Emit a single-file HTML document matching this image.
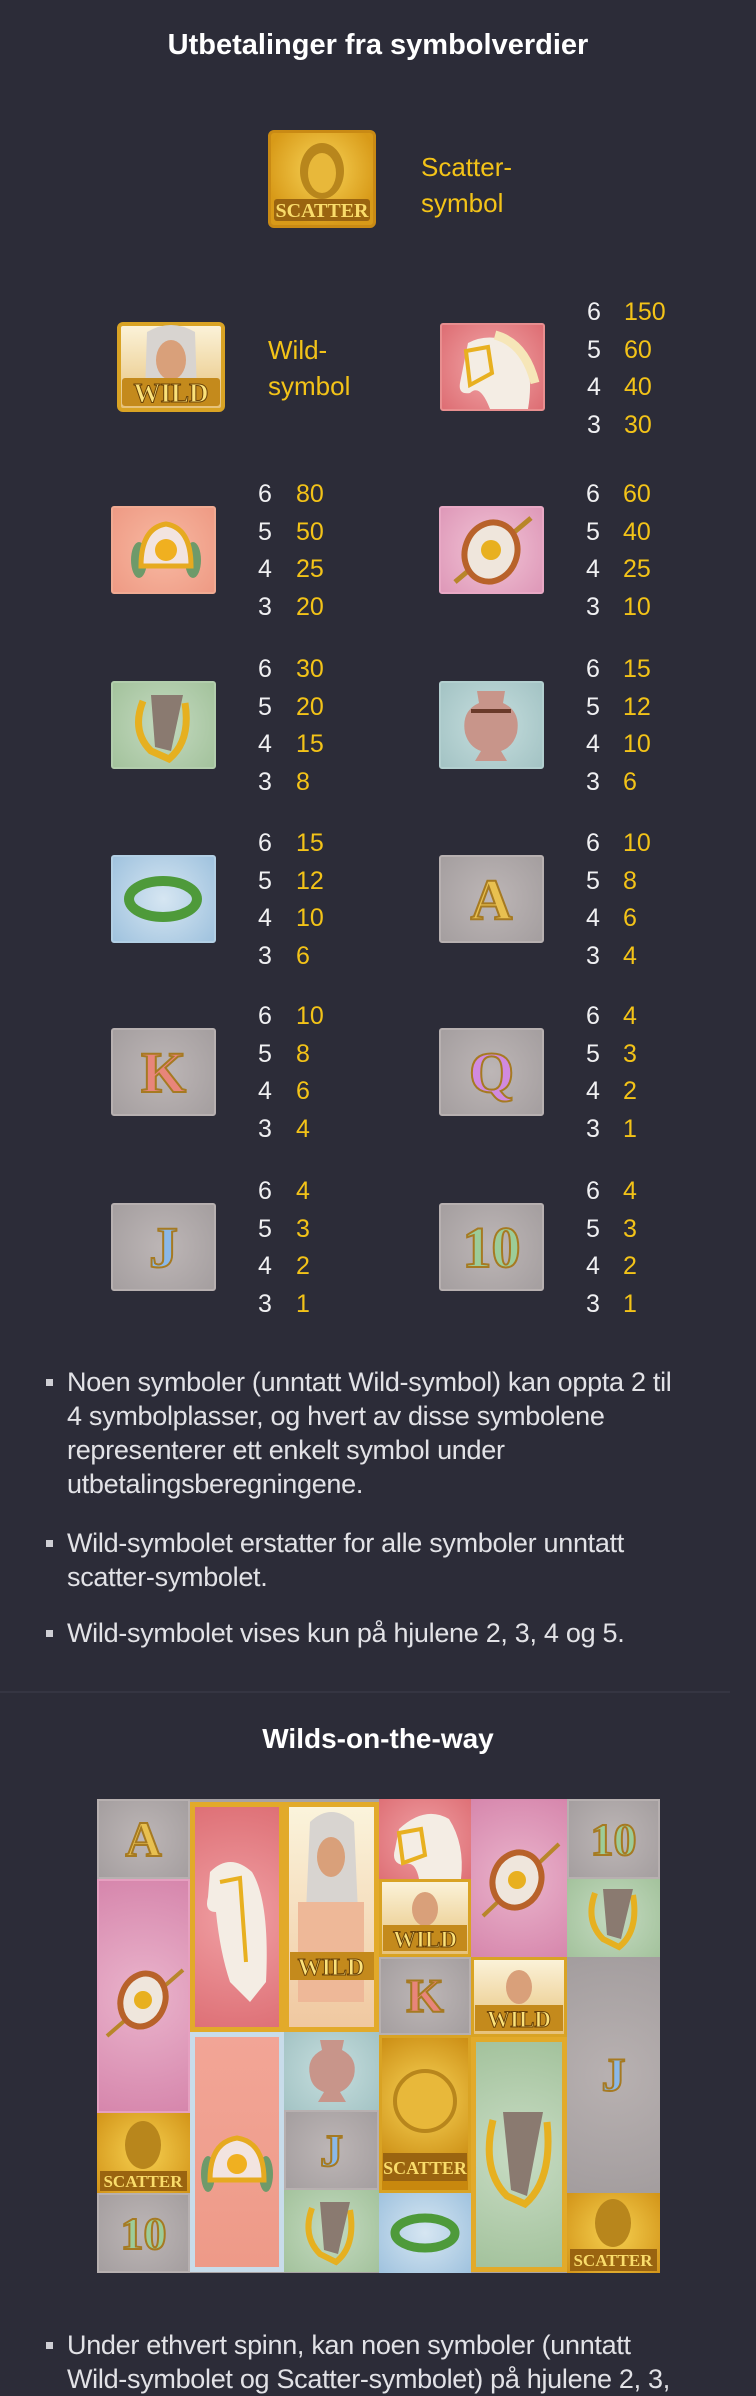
<!DOCTYPE html>
<html><head><meta charset="utf-8">
<style>
*{margin:0;padding:0;box-sizing:border-box}
body{width:756px;height:2384px;background:#2c2c38;position:relative;overflow:hidden;font-family:"Liberation Sans",sans-serif;color:#e8e8ea}
.a{position:absolute}
.t{position:absolute;left:0;width:756px;text-align:center;color:#fff;font-size:29px;font-weight:bold;line-height:34px}
.y{color:#f3c318;font-size:26px;line-height:36px}
.n{position:absolute;font-size:25px;line-height:37.5px}
.n span{display:block}
.w{color:#f0f0f2}
.v{color:#f3c318}
.ic{position:absolute;width:105px;height:88px;border-radius:3px;overflow:hidden}
.grey{background:radial-gradient(circle,#bdb6b6,#a49e9f);border:2px solid #b7b0b0}
.let{position:absolute;left:0;top:0;width:100%;height:100%;display:flex;align-items:center;justify-content:center;font-family:"Liberation Serif",serif;font-weight:bold;font-size:58px;-webkit-text-stroke:2px #a67a22}
.bl{position:absolute;left:67px;width:689px;font-size:27px;line-height:34px;color:#e2e2e6;letter-spacing:-0.3px}
.bl:before{content:"";position:absolute;left:-21px;top:14px;width:7px;height:7px;background:#cfcfd4}
.cell{position:absolute;overflow:hidden}
</style></head><body>

<div class="t" style="top:28px">Utbetalinger fra symbolverdier</div>

<!-- scatter -->
<div class="a" style="left:268px;top:130px;width:108px;height:98px;border-radius:6px;background:radial-gradient(circle at 50% 40%,#f8d458,#d89a18 75%);border:3px solid #c98a14"></div>
<svg class="a" style="left:268px;top:125px" width="108" height="108"><ellipse cx="54" cy="46" rx="22" ry="28" fill="#b8861c"/><ellipse cx="54" cy="48" rx="14" ry="20" fill="#e8b83a"/><rect x="6" y="74" width="96" height="22" rx="3" fill="#9a6410"/><text x="54" y="92" text-anchor="middle" font-family="Liberation Serif" font-weight="bold" font-size="20" fill="#f9dc6a">SCATTER</text></svg>
<div class="a y" style="left:421px;top:149px">Scatter-<br>symbol</div>

<!-- wild -->
<div class="a" style="left:117px;top:322px;width:108px;height:90px;border-radius:6px;background:linear-gradient(#fbf2d8,#e7c27a);border:4px solid #d9a324"></div>
<svg class="a" style="left:117px;top:322px" width="108" height="90"><path d="M30 10 Q54 -4 78 10 L80 70 L28 70Z" fill="#d8d4d0"/><ellipse cx="54" cy="38" rx="15" ry="20" fill="#d9a07a"/><rect x="5" y="56" width="98" height="28" rx="3" fill="#c48a1c"/><text x="54" y="80" text-anchor="middle" font-family="Liberation Serif" font-weight="bold" font-size="27" fill="#fbe27a" stroke="#6a4208" stroke-width="1">WILD</text></svg>
<div class="a y" style="left:268px;top:332px">Wild-<br>symbol</div>

<!-- horse -->
<div class="ic" style="left:440px;top:323px;background:radial-gradient(circle,#f3a9aa,#dd6d73);border:2px solid #e88e8f"></div>
<svg class="a" style="left:440px;top:323px" width="105" height="88"><path d="M28 20 Q50 8 78 22 Q95 45 88 86 L50 86 Q40 60 30 70 Q18 72 20 60Z" fill="#f4ede4"/><path d="M26 28 L48 24 L52 50 L30 62Z" fill="none" stroke="#e8b020" stroke-width="4"/><path d="M55 12 Q85 20 95 60" fill="none" stroke="#f6e6b8" stroke-width="9"/></svg>
<div class="n" style="left:587px;top:294px"><span class="w">6</span><span class="w">5</span><span class="w">4</span><span class="w">3</span></div>
<div class="n" style="left:624px;top:294px"><span class="v">150</span><span class="v">60</span><span class="v">40</span><span class="v">30</span></div>

<!-- row 2 -->
<div class="ic" style="left:111px;top:506px;background:radial-gradient(circle,#f8b9a2,#ee9a84);border:2px solid #f0aa92"></div>
<svg class="a" style="left:111px;top:506px" width="105" height="88"><ellipse cx="28" cy="54" rx="8" ry="18" fill="#6e9a6a"/><ellipse cx="82" cy="54" rx="8" ry="18" fill="#6e9a6a"/><path d="M30 60 Q30 22 55 18 Q80 22 80 60Z" fill="#f2e4e0" stroke="#e6aa20" stroke-width="5"/><circle cx="55" cy="44" r="11" fill="#f0b020"/></svg>
<div class="n" style="left:258px;top:476px"><span class="w">6</span><span class="w">5</span><span class="w">4</span><span class="w">3</span></div>
<div class="n" style="left:296px;top:476px"><span class="v">80</span><span class="v">50</span><span class="v">25</span><span class="v">20</span></div>

<div class="ic" style="left:439px;top:506px;background:radial-gradient(circle,#f2c4d6,#de98b8);border:2px solid #e8a8c4"></div>
<svg class="a" style="left:439px;top:506px" width="105" height="88"><path d="M16 76 L92 12" stroke="#b8862a" stroke-width="5"/><ellipse cx="52" cy="46" rx="26" ry="30" transform="rotate(20 52 46)" fill="#efe6dc" stroke="#b8622a" stroke-width="6"/><circle cx="52" cy="44" r="10" fill="#e8b020"/></svg>
<div class="n" style="left:586px;top:476px"><span class="w">6</span><span class="w">5</span><span class="w">4</span><span class="w">3</span></div>
<div class="n" style="left:623px;top:476px"><span class="v">60</span><span class="v">40</span><span class="v">25</span><span class="v">10</span></div>

<!-- row 3 -->
<div class="ic" style="left:111px;top:681px;background:radial-gradient(circle,#c4dac0,#a3c29c);border:2px solid #b2cdac"></div>
<svg class="a" style="left:111px;top:681px" width="105" height="88"><path d="M32 20 Q20 50 40 70 L58 78 Q80 60 74 22" fill="none" stroke="#e6b020" stroke-width="7"/><path d="M40 14 L72 14 L60 70 L44 66Z" fill="#8a7a70"/></svg>
<div class="n" style="left:258px;top:651px"><span class="w">6</span><span class="w">5</span><span class="w">4</span><span class="w">3</span></div>
<div class="n" style="left:296px;top:651px"><span class="v">30</span><span class="v">20</span><span class="v">15</span><span class="v">8</span></div>

<div class="ic" style="left:439px;top:681px;background:radial-gradient(circle,#c6dede,#a3c3c4);border:2px solid #b2cfcf"></div>
<svg class="a" style="left:439px;top:681px" width="105" height="88"><path d="M38 10 L66 10 L64 22 Q82 30 78 52 Q74 66 62 70 L68 80 L36 80 L42 70 Q30 66 26 52 Q22 30 40 22Z" fill="#c8958a"/><path d="M32 30 L72 30" stroke="#6a3a2a" stroke-width="4"/></svg>
<div class="n" style="left:586px;top:651px"><span class="w">6</span><span class="w">5</span><span class="w">4</span><span class="w">3</span></div>
<div class="n" style="left:623px;top:651px"><span class="v">15</span><span class="v">12</span><span class="v">10</span><span class="v">6</span></div>

<!-- row 4 -->
<div class="ic" style="left:111px;top:855px;background:radial-gradient(circle,#d6e6f2,#9fc2de);border:2px solid #b2cfe4"></div>
<svg class="a" style="left:111px;top:855px" width="105" height="88"><ellipse cx="52" cy="44" rx="34" ry="18" fill="none" stroke="#4e9a3a" stroke-width="10"/></svg>
<div class="n" style="left:258px;top:825px"><span class="w">6</span><span class="w">5</span><span class="w">4</span><span class="w">3</span></div>
<div class="n" style="left:296px;top:825px"><span class="v">15</span><span class="v">12</span><span class="v">10</span><span class="v">6</span></div>

<div class="ic grey" style="left:439px;top:855px"><div class="let" style="color:#e8c050">A</div></div>
<div class="n" style="left:586px;top:825px"><span class="w">6</span><span class="w">5</span><span class="w">4</span><span class="w">3</span></div>
<div class="n" style="left:623px;top:825px"><span class="v">10</span><span class="v">8</span><span class="v">6</span><span class="v">4</span></div>

<!-- row 5 -->
<div class="ic grey" style="left:111px;top:1028px"><div class="let" style="color:#e8857a">K</div></div>
<div class="n" style="left:258px;top:998px"><span class="w">6</span><span class="w">5</span><span class="w">4</span><span class="w">3</span></div>
<div class="n" style="left:296px;top:998px"><span class="v">10</span><span class="v">8</span><span class="v">6</span><span class="v">4</span></div>

<div class="ic grey" style="left:439px;top:1028px"><div class="let" style="color:#d08ae0">Q</div></div>
<div class="n" style="left:586px;top:998px"><span class="w">6</span><span class="w">5</span><span class="w">4</span><span class="w">3</span></div>
<div class="n" style="left:623px;top:998px"><span class="v">4</span><span class="v">3</span><span class="v">2</span><span class="v">1</span></div>

<!-- row 6 -->
<div class="ic grey" style="left:111px;top:1203px"><div class="let" style="color:#8ab8e8">J</div></div>
<div class="n" style="left:258px;top:1173px"><span class="w">6</span><span class="w">5</span><span class="w">4</span><span class="w">3</span></div>
<div class="n" style="left:296px;top:1173px"><span class="v">4</span><span class="v">3</span><span class="v">2</span><span class="v">1</span></div>

<div class="ic grey" style="left:439px;top:1203px"><div class="let" style="color:#9ccc98">10</div></div>
<div class="n" style="left:586px;top:1173px"><span class="w">6</span><span class="w">5</span><span class="w">4</span><span class="w">3</span></div>
<div class="n" style="left:623px;top:1173px"><span class="v">4</span><span class="v">3</span><span class="v">2</span><span class="v">1</span></div>

<!-- bullets -->
<div class="bl" style="top:1365px">Noen symboler (unntatt Wild-symbol) kan oppta 2 til<br>4 symbolplasser, og hvert av disse symbolene<br>representerer ett enkelt symbol under<br>utbetalingsberegningene.</div>
<div class="bl" style="top:1526px">Wild-symbolet erstatter for alle symboler unntatt<br>scatter-symbolet.</div>
<div class="bl" style="top:1616px">Wild-symbolet vises kun på hjulene 2, 3, 4 og 5.</div>

<div class="a" style="left:0;top:1691px;width:730px;height:2px;background:#353542"></div>
<div class="t" style="top:1722px;font-size:28px">Wilds-on-the-way</div>

<!-- grid -->
<div class="a" style="left:97px;top:1799px;width:563px;height:474px;background:#a8a2a3"></div>
<!-- col0 -->
<div class="cell grey" style="left:97px;top:1799px;width:93px;height:80px"><div class="let" style="color:#e8c050;font-size:50px">A</div></div>
<div class="cell" style="left:97px;top:1879px;width:93px;height:234px;background:radial-gradient(circle,#eab4cc,#d686ac);border:2px solid #e6a0c0"></div>
<svg class="a" style="left:97px;top:1960px" width="93" height="80"><path d="M10 76 L86 10" stroke="#b8862a" stroke-width="4"/><ellipse cx="46" cy="40" rx="22" ry="27" transform="rotate(20 46 40)" fill="#efe6dc" stroke="#b8622a" stroke-width="6"/><circle cx="46" cy="40" r="9" fill="#e8b020"/></svg>
<div class="cell" style="left:97px;top:2113px;width:93px;height:80px;background:radial-gradient(circle,#f6d050,#d29418);"></div>
<svg class="a" style="left:97px;top:2113px" width="93" height="80"><ellipse cx="46" cy="32" rx="18" ry="24" fill="#b8861c"/><rect x="3" y="58" width="87" height="20" fill="#9a6410"/><text x="46" y="74" text-anchor="middle" font-family="Liberation Serif" font-weight="bold" font-size="17" fill="#f9dc6a">SCATTER</text></svg>
<div class="cell grey" style="left:97px;top:2193px;width:93px;height:80px"><div class="let" style="color:#9ccc98;font-size:46px">10</div></div>
<!-- col1 -->
<div class="cell" style="left:190px;top:1802px;width:94px;height:230px;background:radial-gradient(circle,#f0a0a4,#de7076);border:5px solid #e2aa2a"></div>
<svg class="a" style="left:190px;top:1802px" width="94" height="230"><path d="M20 70 Q40 50 62 70 Q80 100 76 180 L60 200 L40 180 Q30 150 26 110 Q14 110 18 95Z" fill="#f4ede4"/><path d="M30 80 L50 76 L56 160" fill="none" stroke="#e8b020" stroke-width="4"/></svg>
<div class="cell" style="left:190px;top:2032px;width:94px;height:240px;background:linear-gradient(#f2a596,#ee9a88);border:5px solid #c8dcea"></div>
<svg class="a" style="left:190px;top:2130px" width="94" height="80"><ellipse cx="18" cy="44" rx="7" ry="18" fill="#6e9a6a"/><ellipse cx="76" cy="44" rx="7" ry="18" fill="#6e9a6a"/><path d="M20 50 Q20 12 47 8 Q74 12 74 50Z" fill="#f2e4e0" stroke="#e6aa20" stroke-width="5"/><circle cx="47" cy="34" r="10" fill="#f0b020"/></svg>
<!-- col2 -->
<div class="cell" style="left:284px;top:1802px;width:95px;height:230px;background:linear-gradient(#fbf4dc,#f0c8a0);border:5px solid #e2aa2a"></div>
<svg class="a" style="left:284px;top:1802px" width="95" height="230"><path d="M26 20 Q47 0 70 20 L74 110 L22 110Z" fill="#d8d4d0"/><ellipse cx="47" cy="55" rx="14" ry="20" fill="#d9a07a"/><path d="M14 100 L80 100 L80 200 L14 200Z" fill="#eeb898"/><rect x="6" y="150" width="84" height="28" fill="#c48a1c"/><text x="47" y="173" text-anchor="middle" font-family="Liberation Serif" font-weight="bold" font-size="24" fill="#fbe27a" stroke="#6a4208" stroke-width="1">WILD</text></svg>
<div class="cell" style="left:284px;top:2032px;width:95px;height:78px;background:radial-gradient(circle,#c6dede,#a3c3c4)"></div>
<svg class="a" style="left:284px;top:2032px" width="95" height="78"><path d="M36 8 L60 8 L58 18 Q74 26 70 44 Q66 56 56 60 L62 70 L34 70 L40 60 Q28 56 26 44 Q22 26 38 18Z" fill="#c8958a"/></svg>
<div class="cell grey" style="left:284px;top:2110px;width:95px;height:80px"><div class="let" style="color:#8ab8e8;font-size:46px">J</div></div>
<div class="cell" style="left:284px;top:2190px;width:95px;height:82px;background:radial-gradient(circle,#c4dac0,#a3c29c)"></div>
<svg class="a" style="left:284px;top:2190px" width="95" height="82"><path d="M28 18 Q18 46 36 64 L52 72 Q72 56 66 20" fill="none" stroke="#e6b020" stroke-width="6"/><path d="M36 12 L66 12 L54 64 L40 60Z" fill="#8a7a70"/></svg>
<!-- col3 -->
<div class="cell" style="left:379px;top:1799px;width:92px;height:80px;background:radial-gradient(circle,#f0a0a4,#de7076)"></div>
<svg class="a" style="left:379px;top:1799px" width="92" height="80"><path d="M20 30 Q46 6 70 20 Q86 45 82 80 L40 80 Q36 60 24 66 Q12 64 16 50Z" fill="#f4ede4"/><path d="M20 34 L42 30 L46 56 L24 64Z" fill="none" stroke="#e8b020" stroke-width="4"/></svg>
<div class="cell" style="left:379px;top:1879px;width:92px;height:78px;background:linear-gradient(#fbf2d8,#e7c27a);border:3px solid #d9a324"></div>
<svg class="a" style="left:379px;top:1879px" width="92" height="78"><ellipse cx="46" cy="30" rx="13" ry="17" fill="#d9a07a"/><rect x="4" y="46" width="84" height="26" fill="#c48a1c"/><text x="46" y="68" text-anchor="middle" font-family="Liberation Serif" font-weight="bold" font-size="23" fill="#fbe27a" stroke="#6a4208" stroke-width="1">WILD</text></svg>
<div class="cell grey" style="left:379px;top:1957px;width:92px;height:78px"><div class="let" style="color:#e8857a;font-size:48px">K</div></div>
<div class="cell" style="left:379px;top:2035px;width:92px;height:158px;background:radial-gradient(circle at 50% 40%,#f8d458,#c8880e 80%);border:3px solid #d9a324"></div>
<svg class="a" style="left:379px;top:2035px" width="92" height="158"><circle cx="46" cy="66" r="30" fill="#e8b83a" stroke="#b8861c" stroke-width="4"/><rect x="4" y="118" width="84" height="28" fill="#9a6410"/><text x="46" y="139" text-anchor="middle" font-family="Liberation Serif" font-weight="bold" font-size="18" fill="#f9dc6a">SCATTER</text></svg>
<div class="cell" style="left:379px;top:2193px;width:92px;height:80px;background:radial-gradient(circle,#d6e6f2,#9fc2de)"></div>
<svg class="a" style="left:379px;top:2193px" width="92" height="80"><ellipse cx="46" cy="40" rx="30" ry="15" fill="none" stroke="#4e9a3a" stroke-width="9"/></svg>
<!-- col4 -->
<div class="cell" style="left:471px;top:1799px;width:96px;height:158px;background:radial-gradient(circle,#eab4cc,#d686ac)"></div>
<svg class="a" style="left:471px;top:1830px" width="96" height="96"><path d="M12 86 L88 14" stroke="#b8862a" stroke-width="4"/><ellipse cx="46" cy="50" rx="24" ry="28" transform="rotate(20 46 50)" fill="#efe6dc" stroke="#b8622a" stroke-width="6"/><circle cx="46" cy="50" r="9" fill="#e8b020"/></svg>
<div class="cell" style="left:471px;top:1957px;width:96px;height:80px;background:linear-gradient(#fbf2d8,#e7c27a);border:3px solid #d9a324"></div>
<svg class="a" style="left:471px;top:1957px" width="96" height="80"><ellipse cx="48" cy="30" rx="13" ry="17" fill="#d9a07a"/><rect x="4" y="48" width="88" height="26" fill="#c48a1c"/><text x="48" y="70" text-anchor="middle" font-family="Liberation Serif" font-weight="bold" font-size="23" fill="#fbe27a" stroke="#6a4208" stroke-width="1">WILD</text></svg>
<div class="cell" style="left:471px;top:2037px;width:96px;height:235px;background:radial-gradient(circle,#c8dcc4,#a3c29c);border:5px solid #e2aa2a"></div>
<svg class="a" style="left:471px;top:2100px" width="96" height="120"><path d="M22 20 Q10 70 36 96 L54 104 Q82 80 76 22" fill="none" stroke="#e6b020" stroke-width="7"/><path d="M32 12 L72 12 L56 96 L40 90Z" fill="#8a7a70"/></svg>
<!-- col5 -->
<div class="cell grey" style="left:567px;top:1799px;width:93px;height:80px"><div class="let" style="color:#9ccc98;font-size:46px">10</div></div>
<div class="cell" style="left:567px;top:1879px;width:93px;height:78px;background:radial-gradient(circle,#c4dac0,#a3c29c)"></div>
<svg class="a" style="left:567px;top:1879px" width="93" height="78"><path d="M28 14 Q18 42 36 60 L52 68 Q72 52 66 16" fill="none" stroke="#e6b020" stroke-width="6"/><path d="M36 10 L66 10 L54 60 L40 56Z" fill="#8a7a70"/></svg>
<div class="cell" style="left:567px;top:1957px;width:93px;height:236px;background:radial-gradient(circle,#b8b1b1,#a39d9e)"><div class="let" style="color:#8ab8e8;font-size:48px">J</div></div>
<div class="cell" style="left:567px;top:2193px;width:93px;height:80px;background:radial-gradient(circle,#f6d050,#d29418)"></div>
<svg class="a" style="left:567px;top:2185px" width="93" height="95"><ellipse cx="46" cy="38" rx="18" ry="24" fill="#b8861c"/><rect x="3" y="64" width="87" height="22" fill="#9a6410"/><text x="46" y="81" text-anchor="middle" font-family="Liberation Serif" font-weight="bold" font-size="17" fill="#f9dc6a">SCATTER</text></svg>

<div class="bl" style="top:2328px">Under ethvert spinn, kan noen symboler (unntatt<br>Wild-symbolet og Scatter-symbolet) på hjulene 2, 3,</div>
</body></html>
